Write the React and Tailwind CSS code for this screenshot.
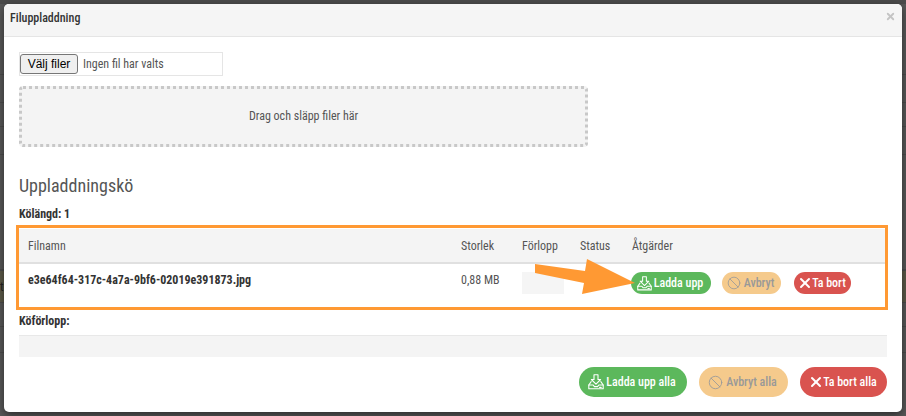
import { Ban, X } from "lucide-react";

function TrayIcon({ size = 16 }) {
  return (
    <svg width={size} height={size} viewBox="0 0 16 16" fill="none" stroke="currentColor" strokeWidth="1.1" strokeLinejoin="round" strokeLinecap="round" className="mr-[2px] shrink-0">
      <path d="M6 .8h4v4.7h2.6L8 10.2 3.4 5.5H6z" />
      <path d="M3.2 7.6.8 11v3.8h14.4V11l-2.4-3.4" />
      <path d="M.8 11h4.4l1.2 1.6h3.2l1.2-1.6h4.4" />
      <path d="M11.6 13.4h1.6" />
    </svg>
  );
}

function Pill({ color, icon, children, big }) {
  return (
    <button
      className={`flex shrink-0 items-center justify-center rounded-full pr-[2px] text-[12px] font-medium ${color} ${
        big ? "h-[30px]" : "h-[22px]"
      }`}
    >
      {icon}
      <span>{children}</span>
    </button>
  );
}

// the page behind the dialog, only its edges show
const backdropRows = [
  "h-[4px] bg-[#4b4b4b]",
  "h-[71px] border-b border-[#4c4c4c]",
  "h-[28px] border-b border-[#4c4c4c]",
  "h-[24px] border-b border-[#4c4c4c]",
  "h-[28px] border-b border-[#4c4c4c]",
  "h-[115px] border-b border-[#4c4c4c]",
];

export default function App() {
  return (
    <div className="relative h-[416px] w-[906px] overflow-hidden bg-[#585858] p-[4px] font-['Roboto',sans-serif] text-[12px] text-[#333] [font-stretch:87%]">
      <div className="absolute inset-0 flex flex-col">
        {backdropRows.map((row, i) => (
          <div key={i} className={row}></div>
        ))}
        <div className="flex h-[33px] items-center border-y border-[#4c4c4c] bg-[#5c5a49] text-[#222]">
          <span>t</span>
        </div>
        <div className="h-[24px] border-b border-[#4c4c4c]"></div>
        <div className="h-[26px] border-b border-[#4c4c4c]"></div>
      </div>

      {/* modal */}
      <div className="relative flex h-[408px] w-[898px] flex-col overflow-hidden rounded-[5px] bg-white shadow-[0_3px_9px_rgba(0,0,0,0.5)]">
        <div className="flex h-[33px] shrink-0 items-center justify-between border-b border-[#e5e5e5] bg-[#f5f5f5] pb-[4px] pl-[6px] pr-[6px]">
          <span className="font-medium">Filuppladdning</span>
          <X size={11} strokeWidth={4} className="-mt-[4px] text-[#c4c4c4]" />
        </div>

        <div className="min-h-0 flex-1 overflow-hidden px-[15px] pt-[15px]">
          <div className="flex h-[24px] w-[204px] items-center border border-[#e5e5e5]">
            <button className="h-[20px] w-[58px] rounded-[3px] border border-[#767676] bg-[#efefef] font-['Liberation_Sans',sans-serif] text-[12px] text-black">
              Välj filer
            </button>
            <span className="ml-[5px] text-[#555]">Ingen fil har valts</span>
          </div>

          <div className="mt-[10px] flex h-[61px] w-[569px] items-center justify-center rounded-[4px] border-[3px] border-dotted border-[#c8c8c8] bg-[#f4f4f4] pb-[2px] text-[#555]">
            Drag och släpp filer här
          </div>

          <h3 className="mt-[29px] text-[18px] font-normal leading-[20px] text-[#555]">Uppladdningskö</h3>
          <p className="mt-[10px] font-bold leading-[16px]">Kölängd: 1</p>

          <div className="mt-[7px] w-[868px]">
            <div className="flex h-[35px] items-center border-b-2 border-[#e0e0e0] bg-[#f4f4f4] text-[#555]">
              <span className="w-[442px] pl-[9px]">Filnamn</span>
              <span className="w-[61px]">Storlek</span>
              <span className="w-[58px]">Förlopp</span>
              <span className="w-[52px]">Status</span>
              <span>Åtgärder</span>
            </div>
            <div className="flex h-[42px] items-start pt-[8px]">
              <span className="w-[442px] pl-[9px] font-bold leading-[16px]">e3e64f64-317c-4a7a-9bf6-02019e391873.jpg</span>
              <span className="w-[61px] leading-[16px] text-[#555]">0,88 MB</span>
              <div className="w-[50px]">
                <div className="h-[22px] w-[42px] bg-[#f5f5f5]"></div>
              </div>
              <div className="ml-[59px] flex">
                <Pill color="w-[80px] bg-[#5cb85c] text-white" icon={<TrayIcon size={15} />}>Ladda upp</Pill>
                <Pill color="ml-[11px] w-[59px] bg-[#f5ca8c] text-[#999]" icon={<Ban size={14} strokeWidth={1.4} className="mr-[3px]" />}>Avbryt</Pill>
                <Pill color="ml-[13px] w-[57px] bg-[#d9534f] text-white" icon={<X size={16} strokeWidth={3} className="-mr-[1px]" />}>Ta bort</Pill>
              </div>
            </div>
          </div>

          <p className="mt-[7px] font-bold leading-[16px]">Köförlopp:</p>
          <div className="mt-[6px] h-[22px] w-[868px] border-t border-[#e8e8e8] bg-[#f4f4f4]"></div>
        </div>

        <div className="flex h-[55px] shrink-0 items-start justify-end gap-[12px] pr-[15px] pt-[10px]">
          <Pill big color="w-[108px] bg-[#5cb85c] text-white" icon={<TrayIcon size={16} />}>Ladda upp alla</Pill>
          <Pill big color="w-[89px] bg-[#f5ca8c] text-[#999]" icon={<Ban size={15} strokeWidth={1.4} className="mr-[3px]" />}>Avbryt alla</Pill>
          <Pill big color="w-[87px] bg-[#d9534f] text-white" icon={<X size={16} strokeWidth={3} className="-mr-[1px]" />}>Ta bort alla</Pill>
        </div>
      </div>

      {/* annotation over the queue row */}
      <div className="pointer-events-none absolute left-[16px] top-[225px] h-[85px] w-[872px] border-[3px] border-[#ff9933]"></div>
      <svg className="pointer-events-none absolute left-[530px] top-[255px]" width="110" height="45" viewBox="0 0 110 45">
        <path d="M5 9 L55 16 L57 4 L105 28 L52 39 L54 28 L5 18 Z" fill="#ff9933" />
      </svg>
    </div>
  );
}
